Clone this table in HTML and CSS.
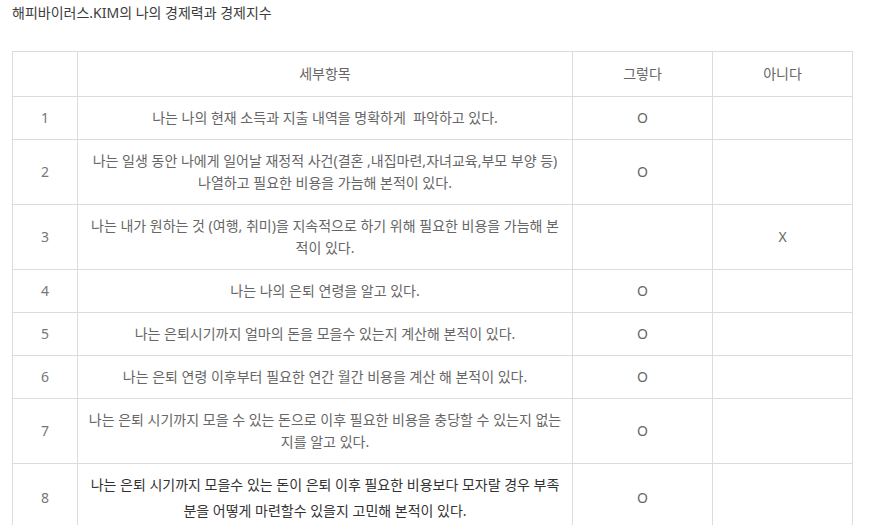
FILE: index.html
```html
<!DOCTYPE html>
<html lang="ko">
<head>
<meta charset="utf-8">
<title>나의 경제력과 경제지수</title>
<link rel="stylesheet" href="styles.css">
</head>
<body>
<div class="page">
  <p class="title">해피바이러스.KIM의 나의 경제력과 경제지수</p>
  <table class="survey">
    <colgroup>
      <col class="c-no">
      <col class="c-item">
      <col class="c-ans">
      <col class="c-ans">
    </colgroup>
    <thead>
      <tr><th></th><th>세부항목</th><th>그렇다</th><th>아니다</th></tr>
    </thead>
    <tbody>
      <tr><td class="no">1</td><td>나는 나의 현재 소득과 지출 내역을 명확하게&nbsp; 파악하고 있다.</td><td>O</td><td></td></tr>
      <tr><td class="no">2</td><td>나는 일생 동안 나에게 일어날 재정적 사건(결혼 ,내집마련,자녀교육,부모 부양 등)<br>나열하고 필요한 비용을 가늠해 본적이 있다.</td><td>O</td><td></td></tr>
      <tr><td class="no">3</td><td>나는 내가 원하는 것 (여행, 취미)을 지속적으로 하기 위해 필요한 비용을 가늠해 본<br>적이 있다.</td><td></td><td>X</td></tr>
      <tr><td class="no">4</td><td>나는 나의 은퇴 연령을 알고 있다.</td><td>O</td><td></td></tr>
      <tr><td class="no">5</td><td>나는 은퇴시기까지 얼마의 돈을 모을수 있는지 계산해 본적이 있다.</td><td>O</td><td></td></tr>
      <tr><td class="no">6</td><td>나는 은퇴 연령 이후부터 필요한 연간 월간 비용을 계산 해 본적이 있다.</td><td>O</td><td></td></tr>
      <tr><td class="no">7</td><td>나는 은퇴 시기까지 모을 수 있는 돈으로 이후 필요한 비용을 충당할 수 있는지 없는<br>지를 알고 있다.</td><td>O</td><td></td></tr>
      <tr><td class="no">8</td><td class="dark">나는 은퇴 시기까지 모을수 있는 돈이 은퇴 이후 필요한 비용보다 모자랄 경우 부족<br>분을 어떻게 마련할수 있을지 고민해 본적이 있다.</td><td>O</td><td></td></tr>
    </tbody>
  </table>
</div>
</body>
</html>
```
FILE: styles.css
```css
html, body {
  margin: 0;
  padding: 0;
  background: #fff;
}
body {
  font-family: "Noto Sans", "Noto Sans CJK KR", sans-serif;
  font-size: 14px;
  color: #666;
}
.page {
  padding: 2px 0 0 12px;
}
.title {
  margin: 0;
  line-height: 22px;
  color: #3c3c3c;
}
.survey {
  margin-top: 27px;
  border-collapse: collapse;
  width: 841px;
  table-layout: fixed;
}
.c-no { width: 65px; }
.c-item { width: 495px; }
.c-ans { width: 140px; }
.survey th,
.survey td {
  border: 1px solid #dcdcdc;
  text-align: center;
  vertical-align: middle;
  line-height: 22px;
  padding: 10px 4px;
  font-weight: normal;
  color: #666;
}
.survey th {
  padding: 11px 4px;
}
.survey td.no {
  color: #777;
}
.survey td.dark {
  color: #333;
  line-height: 26px;
  padding: 8px 4px;
}
```
